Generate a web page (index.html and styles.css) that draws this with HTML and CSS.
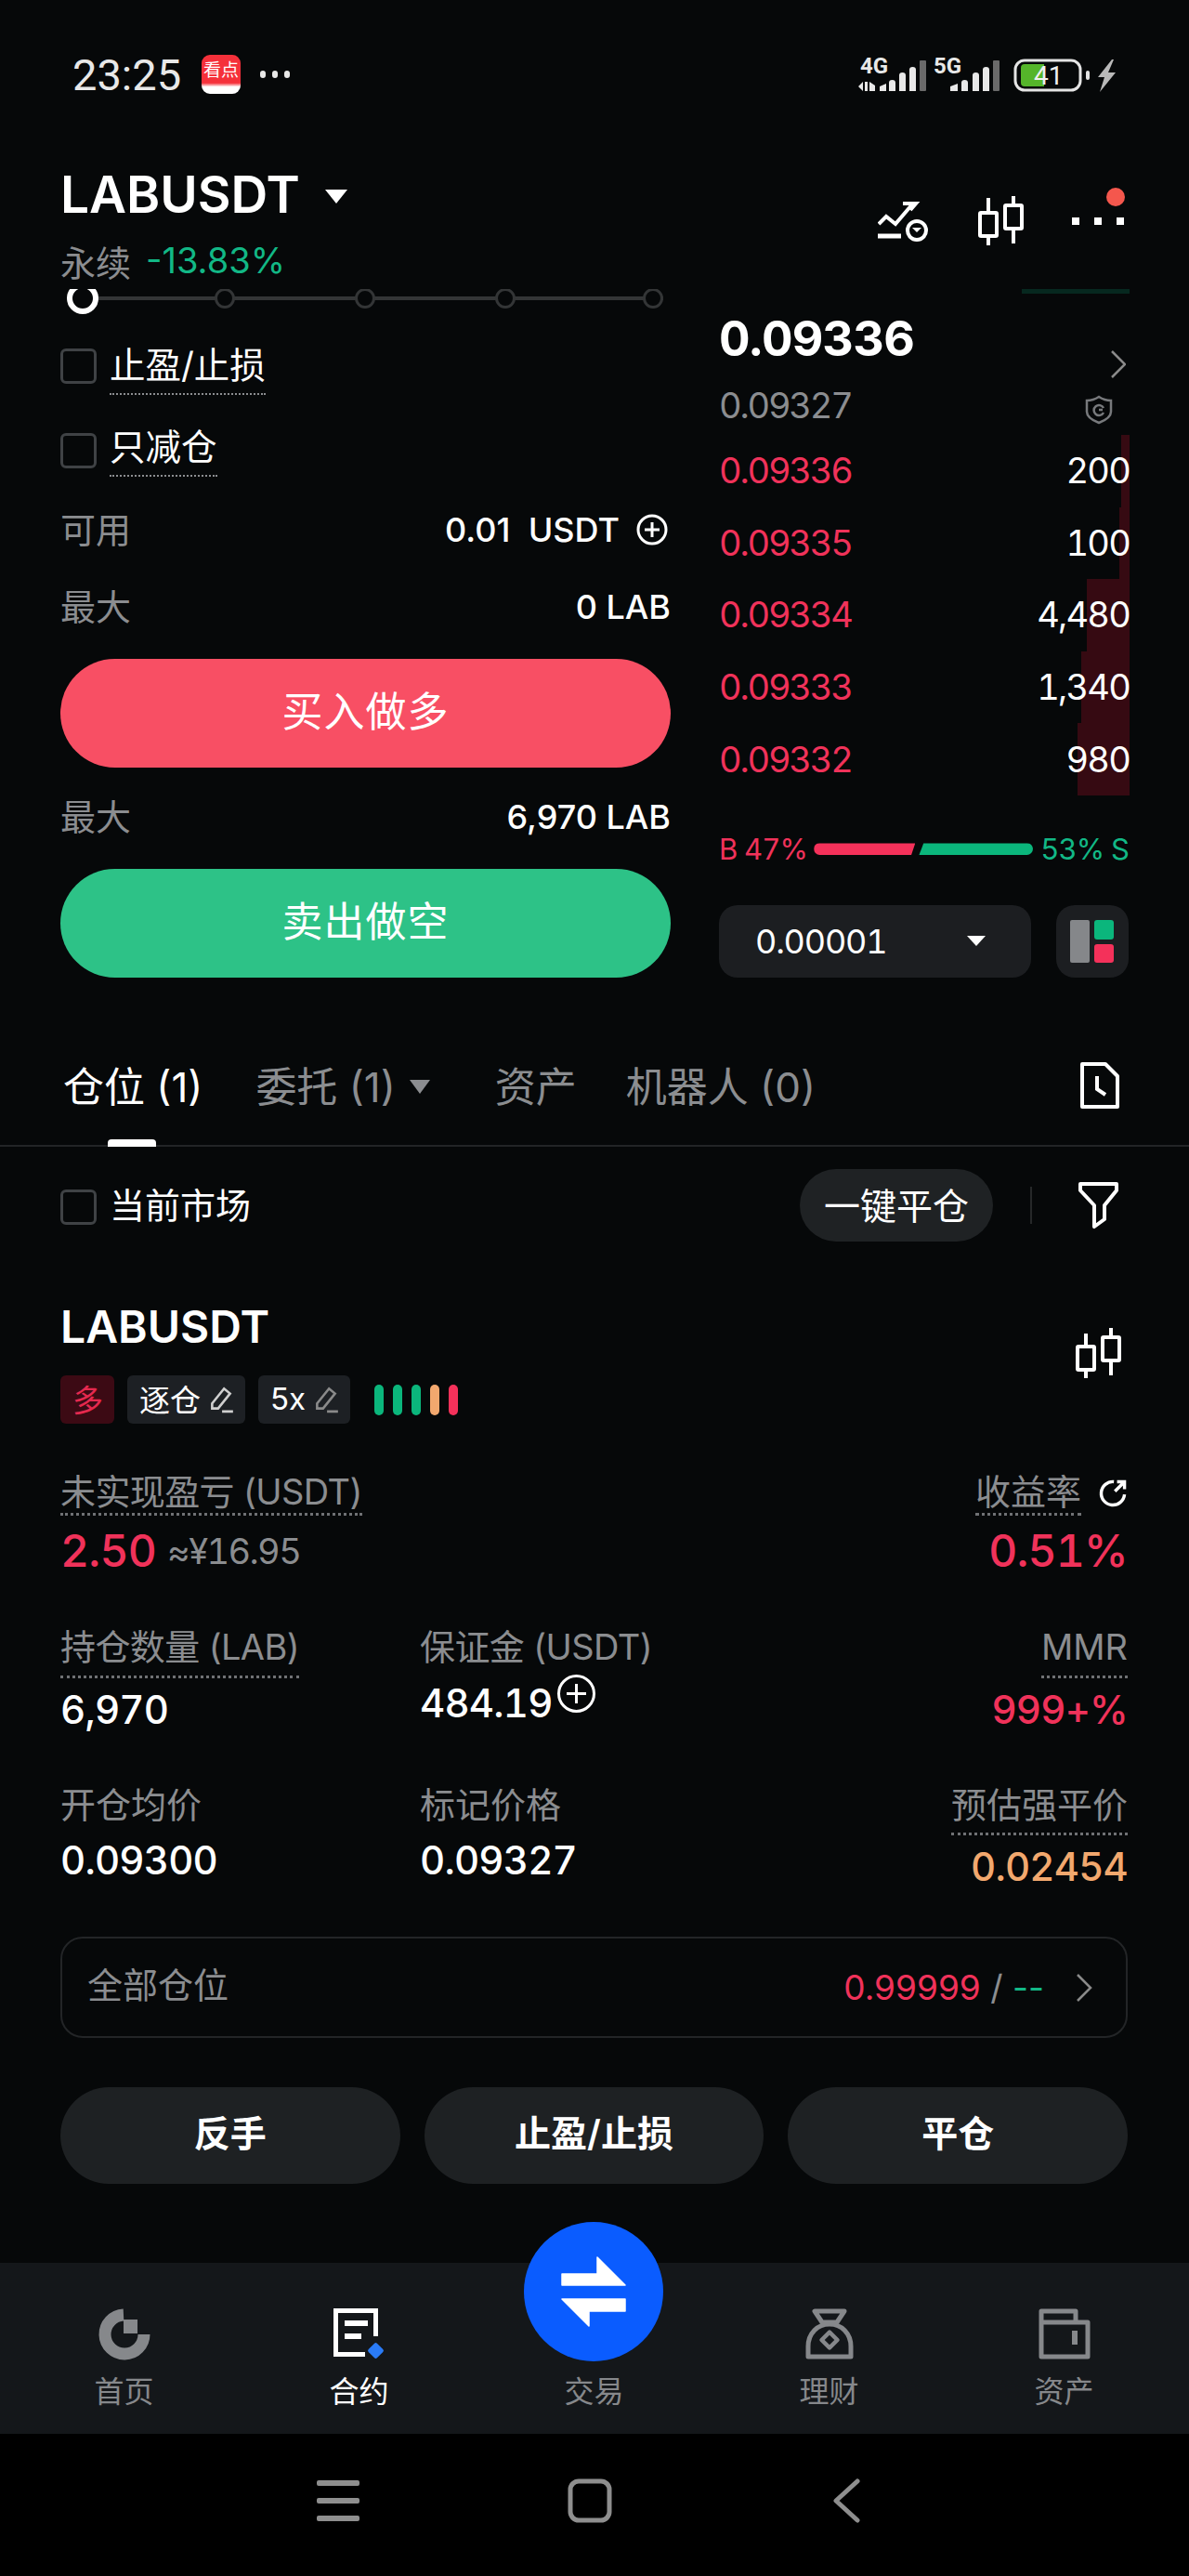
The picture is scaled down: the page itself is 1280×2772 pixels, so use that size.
FILE: index.html
```html
<!doctype html>
<html>
<head>
<meta charset="utf-8">
<title>LABUSDT</title>
<link rel="stylesheet" href="styles.css">
</head>

<body>
<div class="status">
	<span class="time">23:25</span>
	<span class="app_icon">看点</span>
	<span class="status_dots"><i></i><i></i><i></i></span>
	<svg class="status_right" width="300" height="60" viewBox="0 0 300 60">
		<text x="16" y="29" class="net">4G</text>
		<path d="M14 43l5-5v10zM21 38h3v10h-3zM26 38l6 4v6h-6z" fill="#e8e8e8"/>
		<path d="M37 48v-5l7-3v8zM47 48V39q0-3 3.500-3t3.500 3v9zM58 48V31q0-3 3.500-3t3.500 3v17zM69 48V25q0-3 3.500-3t3.500 3v23z" fill="#e8e8e8"/>
		<rect x="80" y="15" width="7" height="33" rx="1" fill="#6a6a6a"/>
		<text x="95" y="29" class="net">5G</text>
		<path d="M113 48v-5l8-3v8zM125 48V39q0-3 3.500-3t3.500 3v9zM137 48V31q0-3 3.500-3t3.500 3v17zM148 48V25q0-3 3.500-3t3.500 3v23z" fill="#e8e8e8"/>
		<rect x="159" y="15" width="7" height="33" rx="1" fill="#6a6a6a"/>
		<rect x="183" y="15" width="70" height="32" rx="10" fill="none" stroke="#e4e4e4" stroke-width="3"/>
		<path d="M193 19h21v24h-21q-4 0-4-4v-16q0-4 4-4z" fill="#55b52a"/>
		<text x="203" y="41" class="batt">41</text>
		<rect x="259" y="26" width="4" height="10" rx="2" fill="#e4e4e4"/>
		<path d="M287 14l-15 19h7l-5 16 17-21h-8l6-14z" fill="#b9b9b9"/>
	</svg>
</div>

<div class="header">
	<div class="symbol">
		<div class="symbol_row">
			<span class="symbol_name">LABUSDT</span>
			<span class="caret caret_lg"></span>
		</div>
		<div class="symbol_sub">
			<span class="muted">永续</span>
			<span class="green">-13.83%</span>
		</div>
	</div>
	<div class="header_tools">
		<svg width="54" height="44" viewBox="0 0 54 44" fill="none" stroke="#fff" stroke-width="4">
			<path d="M1 25l8-8 10 8L37 4"/>
			<path d="M27 3h14l-6 7"/>
			<path d="M0 38h25" stroke-width="5"/>
			<circle cx="42" cy="32" r="10"/>
			<path d="M37 29h10l-5 5z" fill="#fff" stroke="none"/>
		</svg>
		<svg class="candle" width="50" height="54" viewBox="0 0 50 54" fill="none" stroke="#fff" stroke-width="4">
			<path d="M11 2v16M11 43v10M38 0v10M38 35v16"/>
			<rect x="2" y="18" width="18" height="25" rx="1"/>
			<rect x="29" y="10" width="18" height="25" rx="1"/>
		</svg>
		<div class="more">
			<i></i><i></i><i></i>
			<span class="red_dot"></span>
		</div>
	</div>
</div>

<div class="trade">
	<div class="form">
		<div class="slider">
			<span class="knob"></span>
			<span class="node"></span>
			<span class="node"></span>
			<span class="node"></span>
			<span class="node node_last"></span>
		</div>
		<div class="check_row">
			<span class="checkbox"></span>
			<span class="dotted">止盈/止损</span>
		</div>
		<div class="check_row check_row_2">
			<span class="checkbox"></span>
			<span class="dotted">只减仓</span>
		</div>
		<div class="info_row">
			<span class="muted">可用</span>
			<span class="info_val"><span>0.01&nbsp; USDT</span><svg class="plus_sm" width="34" height="34" viewBox="0 0 34 34" fill="none" stroke="#fff" stroke-width="3"><circle cx="17" cy="17" r="15"/><path d="M9 17h16M17 9v16"/></svg></span>
		</div>
		<div class="info_row">
			<span class="muted">最大</span>
			<span class="info_val">0 LAB</span>
		</div>
		<div class="big_btn buy">买入做多</div>
		<div class="info_row info_row_tall">
			<span class="muted">最大</span>
			<span class="info_val">6,970 LAB</span>
		</div>
		<div class="big_btn sell">卖出做空</div>
	</div>

	<div class="book">
		<div class="book_top"></div>
		<div class="ticker">
			<div>
				<div class="last_price">0.09336</div>
				<div class="mark_price">0.09327</div>
			</div>
			<div class="ticker_icons">
				<svg class="chevron" width="16" height="30" viewBox="0 0 16 30" fill="none" stroke="#8a8a8a" stroke-width="2.5"><path d="M1 1l14 14L1 29"/></svg>
				<svg class="shield" width="30" height="32" viewBox="0 0 30 32" fill="none" stroke="#77797c" stroke-width="2.5"><path d="M2 6q7 0 13-4 6 4 13 4v12q0 7-13 12Q2 25 2 18z"/><path d="M20 14a5.500 5.500 0 1 0 0 5M15 16h4"/></svg>
			</div>
		</div>
		<div class="level"><span class="depth" style="width:9px"></span><span class="level_price">0.09336</span><span class="level_size">200</span></div>
		<div class="level"><span class="depth" style="width:11px"></span><span class="level_price">0.09335</span><span class="level_size">100</span></div>
		<div class="level"><span class="depth" style="width:46px"></span><span class="level_price">0.09334</span><span class="level_size">4,480</span></div>
		<div class="level"><span class="depth" style="width:52px"></span><span class="level_price">0.09333</span><span class="level_size">1,340</span></div>
		<div class="level"><span class="depth" style="width:56px"></span><span class="level_price">0.09332</span><span class="level_size">980</span></div>
		<div class="ratio">
			<span class="red">B 47%</span>
			<span class="ratio_bar ratio_buy"></span>
			<span class="ratio_bar ratio_sell"></span>
			<span class="green">53% S</span>
		</div>
		<div class="book_tools">
			<div class="tick_select">
				<span>0.00001</span>
				<span class="caret"></span>
			</div>
			<div class="layout_btn">
				<svg width="48" height="46" viewBox="0 0 48 46">
					<rect x="0" y="0" width="21" height="46" rx="2" fill="#85878a"/>
					<rect x="26" y="0" width="21" height="21" rx="3" fill="#0bb67c"/>
					<rect x="26" y="26" width="21" height="20" rx="3" fill="#f4315a"/>
				</svg>
			</div>
		</div>
	</div>
</div>

<div class="tabs">
	<div class="tab tab_on">仓位 (1)</div>
	<div class="tab tab_order">委托 (1)<span class="caret caret_tab"></span></div>
	<div class="tab tab_assets">资产</div>
	<div class="tab tab_bot">机器人 (0)</div>
	<svg class="tab_icon" width="42" height="50" viewBox="0 0 42 50" fill="none" stroke="#fff" stroke-width="4">
		<path d="M2 2h25l13 13v33H2z" stroke-linejoin="round"/>
		<path d="M18 15v14l9 6"/>
	</svg>
</div>

<div class="toolbar">
	<span class="checkbox"></span>
	<span class="toolbar_label">当前市场</span>
	<span class="close_all">一键平仓</span>
	<span class="toolbar_sep"></span>
	<svg width="44" height="50" viewBox="0 0 44 50" fill="none" stroke="#fff" stroke-width="4" stroke-linejoin="round">
		<path d="M2 2h39v7L28 25v15l-11 8V25L2 9z"/>
	</svg>
</div>

<div class="position">
	<div class="pos_head">
		<div>
			<div class="pos_name">LABUSDT</div>
			<div class="tags">
				<span class="tag tag_long">多</span>
				<span class="tag">逐仓<svg width="28" height="30" viewBox="0 0 26 28" fill="none" stroke="#cfcfcf" stroke-width="2.400"><path d="M4 18L16 3l6 5-12 15H4zM14 26h11"/></svg></span>
				<span class="tag">5x<svg width="28" height="30" viewBox="0 0 26 28" fill="none" stroke="#8a8a8a" stroke-width="2.400"><path d="M4 18L16 3l6 5-12 15H4zM14 26h11"/></svg></span>
				<span class="adl">
					<i class="adl_g"></i><i class="adl_g"></i><i class="adl_g"></i><i class="adl_o"></i><i class="adl_r"></i>
				</span>
			</div>
		</div>
		<svg class="candle_sm" width="50" height="54" viewBox="0 0 50 54" fill="none" stroke="#fff" stroke-width="4">
			<path d="M11 6v14M11 45v9M38 0v10M38 35v16"/>
			<rect x="2" y="20" width="18" height="25" rx="1"/>
			<rect x="29" y="10" width="18" height="25" rx="1"/>
		</svg>
	</div>

	<div class="stats">
		<div class="stat stat_a">
			<span class="stat_label line stat_label_en">未实现盈亏 (USDT)</span>
			<div class="stat_val big red">2.50 <small>≈¥16.95</small></div>
		</div>
		<div class="stat stat_a"></div>
		<div class="stat stat_a stat_r">
			<div class="yield_head">
				<span class="stat_label line">收益率</span>
				<svg width="32" height="32" viewBox="0 0 28 28" fill="none" stroke="#fff" stroke-width="3"><path d="M15 3a11 11 0 1 0 10 12M16 12l9-9M18 3h7v7"/></svg>
			</div>
			<div class="stat_val big red">0.51%</div>
		</div>

		<div class="stat stat_b">
			<span class="stat_label line stat_label_en">持仓数量 (LAB)</span>
			<div class="stat_val">6,970</div>
		</div>
		<div class="stat stat_b">
			<span class="stat_label stat_label_en">保证金 (USDT)</span>
			<div class="stat_val stat_val_up">484.19<svg class="plus_lg" width="43" height="43" viewBox="0 0 43 43" fill="none" stroke="#fff" stroke-width="3"><circle cx="21.500" cy="21.500" r="19"/><path d="M11 21.500h21M21.500 11v21"/></svg></div>
		</div>
		<div class="stat stat_b stat_r">
			<span class="stat_label line">MMR</span>
			<div class="stat_val red">999+%</div>
		</div>

		<div class="stat stat_c">
			<span class="stat_label">开仓均价</span>
			<div class="stat_val">0.09300</div>
		</div>
		<div class="stat stat_c">
			<span class="stat_label">标记价格</span>
			<div class="stat_val">0.09327</div>
		</div>
		<div class="stat stat_c stat_r">
			<span class="stat_label line">预估强平价</span>
			<div class="stat_val orange">0.02454</div>
		</div>
	</div>

	<div class="all_pos">
		<span class="muted all_label">全部仓位</span>
		<span class="all_val"><span class="red">0.99999</span> <span class="muted">/</span> <span class="green">--</span></span>
		<svg width="18" height="30" viewBox="0 0 18 30" fill="none" stroke="#8a8a8a" stroke-width="2.500"><path d="M2 1l14 14L2 29"/></svg>
	</div>

	<div class="actions">
		<div class="action">反手</div>
		<div class="action">止盈/止损</div>
		<div class="action">平仓</div>
	</div>
</div>

<div class="nav">
	<div class="nav_item">
		<svg width="56" height="56" viewBox="0 0 56 56" fill="#86888b">
			<path d="M27 7A21 21 0 1 0 49 28" fill="none" stroke="#86888b" stroke-width="13"/>
			<rect x="27" y="12" width="15" height="15"/>
		</svg>
		<span>首页</span>
	</div>
	<div class="nav_item nav_on">
		<svg width="56" height="56" viewBox="0 0 56 56" fill="#fff">
			<path d="M45.500 30V2.500H2.500V49.500H34" fill="none" stroke="#fff" stroke-width="5"/>
			<rect x="12" y="13" width="25" height="6"/>
			<rect x="12" y="27" width="18" height="6"/>
			<rect x="39" y="39" width="13" height="13" rx="2" fill="#2a7bf6" transform="rotate(45 45.500 45.500)"/>
		</svg>
		<span>合约</span>
	</div>
	<div class="nav_item">
		<span class="nav_blank"></span>
		<span>交易</span>
	</div>
	<div class="nav_item">
		<svg width="56" height="56" viewBox="0 0 56 56" fill="none" stroke="#86888b" stroke-width="5" stroke-linejoin="round">
			<path d="M12 3h32l-8 12H20z"/>
			<path d="M5 52h46V41C51 27 41 17 28 17S5 27 5 41z"/>
			<rect x="22" y="28" width="12" height="12" stroke-width="4.500" transform="rotate(45 28 34)"/>
		</svg>
		<span>理财</span>
	</div>
	<div class="nav_item">
		<svg width="56" height="56" viewBox="0 0 56 56" fill="none" stroke="#86888b" stroke-width="5" stroke-linejoin="round">
			<path d="M3 3h37v12h13v37H3zM3 15h37"/>
			<path d="M39 24v15" stroke-width="6"/>
		</svg>
		<span>资产</span>
	</div>
	<div class="swap_btn">
		<svg width="70" height="76" viewBox="0 0 70 76" fill="#fff" stroke="#fff" stroke-width="1.500" stroke-linejoin="round">
			<path d="M1 19h38V1l30 30H1zM1 46h68v13H30v16z"/>
		</svg>
	</div>
</div>

<div class="sysbar">
	<svg width="46" height="48" viewBox="0 0 46 48" fill="#8e8e8e"><rect y="2" width="46" height="6" rx="2"/><rect y="21" width="46" height="6" rx="2"/><rect y="40" width="46" height="6" rx="2"/></svg>
	<svg class="sys_home" width="48" height="48" viewBox="0 0 48 48" fill="none" stroke="#8e8e8e" stroke-width="5"><rect x="3" y="3" width="42" height="42" rx="9"/></svg>
	<svg class="sys_back" width="32" height="48" viewBox="0 0 32 48" fill="none" stroke="#8e8e8e" stroke-width="5" stroke-linecap="round" stroke-linejoin="round"><path d="M28 3L5 24l23 21"/></svg>
</div>
</body>
</html>
```

FILE: styles.css
```css
* {box-sizing: border-box;}
body {margin: 0; padding: 0; width: 1280px; height: 2772px; overflow: hidden; background: #060809; color: #fff; font-family: Inter, "Noto Sans CJK SC", sans-serif; font-size: 38px;}
i {display: block;}
.muted {color: #8b8d90;}
.green {color: #12b886;}
.red {color: #f0325a;}
.orange {color: #f2a86e;}

.status {height: 160px; padding: 0 70px 0 78px; display: flex; align-items: center;}
.time {font-family: Roboto, sans-serif; font-size: 47px; color: #e8e8e8;}
.app_icon {width: 42px; height: 42px; margin-left: 22px; padding-top: 6px; border-radius: 9px; background: linear-gradient(#f5303a 72%, #fff 82%); font-size: 19px; line-height: 22px; text-align: center; overflow: hidden;}
.status_dots {display: flex; gap: 7px; margin-left: 21px;}
.status_dots i {width: 6px; height: 8px; border-radius: 3px; background: #e8e8e8;}
.status_right {margin-left: auto;}
.net {font-family: Roboto, sans-serif; font-weight: 700; font-size: 24px; fill: #e8e8e8;}
.batt {font-family: Roboto, sans-serif; font-size: 28px; fill: #f0f0f0;}

.header {height: 151px; padding: 0 70px 0 65px; display: flex; justify-content: space-between;}
.symbol_row {height: 98px; display: flex; align-items: center; gap: 27px;}
.symbol_name {font-size: 55px; font-weight: 600;}
.symbol_sub {height: 44px; display: flex; align-items: center; gap: 16px;}
.caret {width: 0; height: 0; border-left: 10px solid transparent; border-right: 10px solid transparent; border-top: 11px solid #fff;}
.caret_lg {border-left-width: 12px; border-right-width: 12px; border-top-width: 15px; margin-top: 4px;}
.header_tools {display: flex; align-items: center; height: 156px;}
.candle {margin-left: 54px;}
.more {position: relative; display: flex; gap: 16px; margin-left: 51px;}
.more i {width: 8px; height: 8px; background: #fff;}
.red_dot {position: absolute; right: -1px; top: -32px; width: 20px; height: 20px; border-radius: 50%; background: #f4574d;}

.trade {height: 741px; padding: 0 64px 0 65px; display: flex; gap: 52px; overflow: hidden;}
.form {width: 657px; flex: none;}
.slider {position: relative; height: 20px; margin-left: 7px; width: 642px; display: flex; align-items: center; gap: 129px;}
.slider:before {content: ""; position: absolute; left: 0; right: 0; top: 8px; height: 4px; background: #333536;}
.knob {position: relative; flex: none; width: 34px; height: 34px; margin-right: -4px; border: 6px solid #fff; border-radius: 50%; background: #060809;}
.node {position: relative; flex: none; width: 22px; height: 22px; border: 3px solid #333536; border-radius: 50%; background: #060809;}
.node_last {margin-left: 8px;}
.check_row {height: 91px; display: flex; align-items: center; gap: 14px;}
.slider + .check_row {margin-top: 17px;}
.check_row .dotted {margin-top: 6px;}
.check_row_2 .dotted {margin-top: 0;}
.checkbox {width: 39px; height: 38px; flex: none; border: 3px solid #3f4245; border-radius: 6px;}
.dotted {padding-bottom: 6px; border-bottom: 2px dotted #8b8d90; line-height: 48px; font-size: 38.5px;}
.info_row {height: 83px; display: flex; align-items: center; justify-content: space-between;}
.info_row .muted {margin-bottom: 8px;}
.info_row_tall {height: 109px;}
.info_val {display: flex; align-items: center; margin-bottom: 3px; font-size: 36px; font-weight: 500; white-space: nowrap;}
.plus_sm {margin: 0 3px 0 18px;}
.big_btn {height: 117px; padding-bottom: 10px; border-radius: 59px; display: flex; align-items: center; justify-content: center; font-size: 44px; letter-spacing: 1px;}
.buy {margin-top: 13px; background: #f84f64;}
.sell {background: #2dc287;}

.book {width: 442px; flex: none; letter-spacing: -2.2px; font-variant-numeric: tabular-nums;}
.book_top {width: 116px; height: 5px; margin-left: auto; background: #06281f;}
.ticker {height: 152px; display: flex; justify-content: space-between;}
.last_price {height: 98px; padding-top: 20px; font-size: 52px; font-weight: 700; line-height: 58px; letter-spacing: -0.8px;}
.mark_price {color: #8b8d90; line-height: 44px;}
.ticker_icons {width: 52px; display: flex; flex-direction: column; align-items: flex-end; padding-top: 61px;}
.chevron {margin-right: 4px;}
.shield {margin: 18px 18px 0 0;}
.level {position: relative; height: 77.6px; padding-bottom: 1px; display: flex; align-items: center; justify-content: space-between;}
.depth {position: absolute; top: 0; right: 0; bottom: 0; background: #360a12;}
.level_price {color: #f0325a;}
.level_size {position: relative; letter-spacing: -1.8px;}
.ratio {height: 40px; margin-top: 38px; display: flex; align-items: center; font-size: 31px; letter-spacing: -0.8px; white-space: nowrap;}
.ratio_bar {height: 13px;}
.ratio_buy {width: 109px; margin-left: 7px; background: #f4315a; border-radius: 7px 0 0 7px; clip-path: polygon(0 0, 100% 0, 96% 100%, 0 100%);}
.ratio_sell {width: 123px; margin: 0 8px 0 4px; background: #0bb67c; border-radius: 0 7px 7px 0; clip-path: polygon(4% 0, 100% 0, 100% 100%, 0 100%);}
.book_tools {margin-top: 40px; display: flex; gap: 27px;}
.tick_select {width: 336px; height: 78px; padding: 0 49px 0 39px; border-radius: 20px; background: #1c1e21; display: flex; align-items: center; justify-content: space-between; font-size: 36px; letter-spacing: -1.2px;}
.layout_btn {width: 78px; height: 78px; border-radius: 20px; background: #1c1e21; display: flex; align-items: center; justify-content: center;}

.tabs {height: 182px; padding: 50px 75px 0 68px; border-bottom: 2px solid #222426; display: flex; align-items: center; font-size: 44px; color: #8b8d90;}
.tab {position: relative; white-space: nowrap;}
.tab_on {color: #fff;}
.tab_on:after {content: ""; position: absolute; left: 48px; bottom: -35px; width: 52px; height: 8px; border-radius: 4px 4px 0 0; background: #fff;}
.tab_order {margin-left: 57px; display: flex; align-items: center;}
.caret_tab {margin-left: 15px; margin-top: 4px; border-top-color: #8b8d90; border-left-width: 11px; border-right-width: 11px; border-top-width: 15px;}
.tab_assets {margin-left: 70px;}
.tab_bot {margin-left: 53px;}
.tab_icon {margin-left: auto; margin-top: 2px;}

.toolbar {height: 126px; padding: 0 75px 0 65px; display: flex; align-items: center;}
.toolbar .checkbox {margin-top: 3px;}
.toolbar_label {margin: 0 0 5px 14px;}
.close_all {margin-left: auto; width: 208px; height: 78px; padding-bottom: 5px; border-radius: 39px; background: #1f2224; display: flex; align-items: center; justify-content: center; font-size: 39px;}
.toolbar_sep {width: 2px; height: 40px; margin: 0 50px 0 40px; background: #262829;}

.position {padding: 30px 66px 0 65px;}
.pos_head {display: flex; justify-content: space-between; align-items: center;}
.pos_name {height: 74px; font-size: 48px; font-weight: 600; line-height: 76px;}
.tags {margin-top: 16px; height: 52px; display: flex; align-items: center; gap: 14px;}
.tag {height: 52px; padding: 0 12px 3px 13px; border-radius: 6px; background: #1d2024; display: flex; align-items: center; gap: 8px; font-size: 33px;}
.tag svg {margin-top: 3px;}
.tag_long {background: #3c0a14; color: #e5294f;}
.adl {display: flex; gap: 10px; margin-left: 12px;}
.adl i {width: 10px; height: 33px; border-radius: 5px;}
.adl_g {background: #0bb67c;}
.adl_o {background: #f2a86e;}
.adl_r {background: #f4315a;}
.candle_sm {margin-right: 6px; margin-top: -10px;}

.stats {margin-top: 50px; display: grid; grid-template-columns: 387px 1fr auto;}
.stat {display: flex; flex-direction: column; align-items: flex-start;}
.stat_r {align-items: flex-end;}
.stat_a {height: 167px;}
.stat_b {height: 170px;}
.stat_c {height: 165px;}
.stat_label {color: #8b8d90; line-height: 46px; font-size: 38px; white-space: nowrap;}
.stat_label_en {letter-spacing: -0.6px;}
.line {border-bottom: 3px dotted #6f7174;}
.stat_a .stat_val {margin-top: 15px;}
.stat_b .line {padding-bottom: 8px;}
.stat_b .stat_val {margin-top: 11px;}
.stat_b .stat_label:not(.line) {margin-bottom: 11px;}
.stat_c .line {padding-bottom: 7px;}
.stat_c .stat_val {margin-top: 14px;}
.stat_c .line + .stat_val {margin-top: 11px;}
.stat_val {display: flex; align-items: center; font-size: 42px; font-weight: 500; line-height: 46px; letter-spacing: -0.8px; font-variant-numeric: tabular-nums; white-space: pre;}
.stat_a .big {font-size: 48px;}
.big small {font-size: 38px; font-weight: 400; letter-spacing: -1.6px; color: #8b8d90;}
.stat_b .stat_val_up {margin-top: 4px;}
.plus_lg {margin: -22px 0 0 4px;}
.yield_head {display: flex; align-items: center; gap: 18px; height: 49px;}

.all_pos {height: 109px; padding: 0 36px 0 27px; border: 2px solid #232527; border-radius: 24px; display: flex; align-items: center;}
.all_label {margin-bottom: 10px;}
.all_val {margin: 0 34px 0 auto; font-size: 37px;}
.actions {margin-top: 53px; display: flex; gap: 26px;}
.action {flex: 1; height: 104px; padding-bottom: 10px; border-radius: 52px; background: #1e2123; display: flex; align-items: center; justify-content: center; font-size: 39px; font-weight: 600;}

.nav {position: relative; height: 184px; margin-top: 85px; padding: 0 7px; background: #14171a; display: grid; grid-template-columns: repeat(5, 253px);}
.nav_item {padding-top: 49px; display: flex; flex-direction: column; align-items: center; font-size: 32px; color: #86888b; line-height: 44px;}
.nav_item svg, .nav_blank {height: 56px; flex: none;}
.nav_item span:last-child {margin-top: 12px;}
.nav_on {color: #fff;}
.swap_btn {position: absolute; left: 564px; top: -44px; width: 150px; height: 150px; border-radius: 50%; background: #0a5cff; display: flex; align-items: center; justify-content: center;}

.sysbar {height: 153px; padding: 0 0 10px 341px; background: #000; display: flex; align-items: center;}
.sys_home {margin-left: 224px;}
.sys_back {margin-left: 236px;}
```
